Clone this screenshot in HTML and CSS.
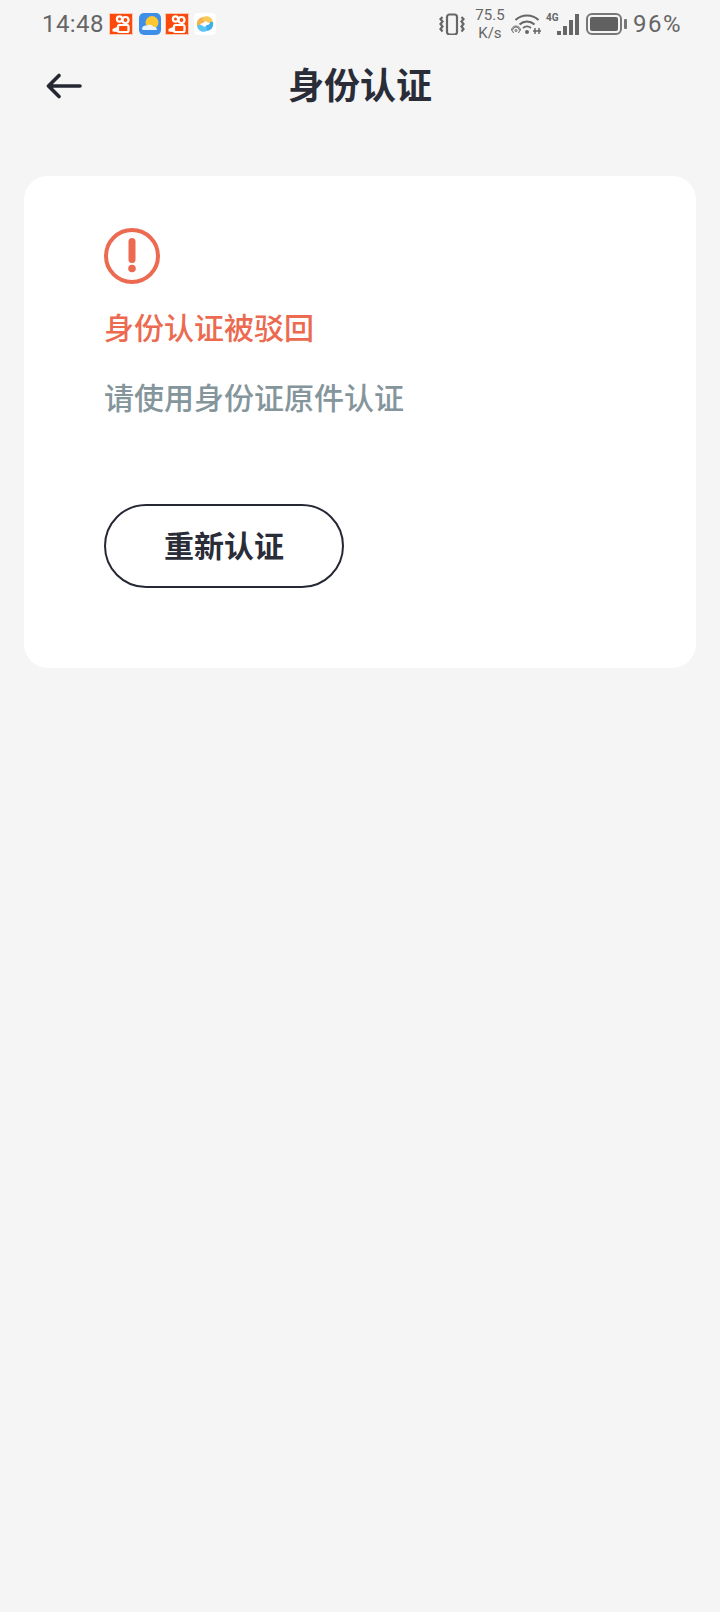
FILE: index.html
```html
<!DOCTYPE html>
<html lang="zh-CN">
<head>
    <meta charset="UTF-8">
    <meta name="viewport" content="width=device-width, initial-scale=1.0">
    <title>身份认证</title>
    <link rel="stylesheet" href="styles.css">
</head>
<body>
    <div class="status">
        <div class="status-left">
            <span class="clock">14:48</span>
            <svg class="app" viewBox="0 0 24 24"><rect y="1" width="24" height="22" fill="#fc4a0c"/><rect x=".5" y="1.500" width="23" height="21" fill="none" stroke="#fdc9b4"/><g fill="none" stroke="#fff" stroke-width="2.200"><circle cx="10.500" cy="7" r="2.600"/><circle cx="16.500" cy="8" r="3"/><rect x="9" y="13" width="10.500" height="7" rx="1.500"/></g><path d="M8 15l-4.500 2v2.500L8 20z" fill="#fff"/></svg>
            <svg class="app" viewBox="0 0 24 24"><rect x="2" y="1" width="22" height="22" rx="5" fill="#3d8fe8"/><circle cx="15" cy="10.500" r="6.500" fill="#fdc731"/><path d="M5 17c0-3 3-4 5-3.500 2-1.500 5-1 6 1 2 0 4 1 4 3.500H7c-1 0-2-.5-2-1z" fill="#e8f3fd"/></svg>
            <svg class="app" viewBox="0 0 24 24"><rect y="1" width="24" height="22" fill="#fc4a0c"/><rect x=".5" y="1.500" width="23" height="21" fill="none" stroke="#fdc9b4"/><g fill="none" stroke="#fff" stroke-width="2.200"><circle cx="10.500" cy="7" r="2.600"/><circle cx="16.500" cy="8" r="3"/><rect x="9" y="13" width="10.500" height="7" rx="1.500"/></g><path d="M8 15l-4.500 2v2.500L8 20z" fill="#fff"/></svg>
            <svg class="app" viewBox="0 0 24 24"><rect x="1" y="1" width="22" height="22" rx="4" fill="#fff"/><path d="M4 14c-1-5 2-9 7-9 2 2 1 5-1 6-2 0-3 1-3 3z" fill="#f6b24c"/><path d="M10 5c4-2 9 0 10 5-2 2-4 1-6 0-1-1-3-1-4-1z" fill="#f8c95a"/><path d="M20 10c1 5-2 9-7 9-2-2-1-5 1-6 2 0 3-1 3-3z" fill="#3cb0ef"/><path d="M14 19c-4 2-9 0-10-5 2-2 4-1 6 0 1 1 3 1 4 1z" fill="#5cc4f5"/></svg>
        </div>
        <div class="status-right">
            <svg class="ic-vibrate" viewBox="0 0 26 22" fill="none" stroke="#666" stroke-width="2.200"><rect x="8" y="1.500" width="10" height="20" rx="2.500"/><path d="M3.500 4l-2 2 2 2.500-2 2.500 2 2.500-2 2.500 2 2.500M22.500 4l2 2-2 2.500 2 2.500-2 2.500 2 2.500-2 2.500"/></svg>
            <div class="speed"><span>75.5</span><span>K/s</span></div>
            <svg class="ic-wifi" viewBox="0 0 30 22"><g fill="none" stroke="#666" stroke-width="2.200"><path d="M4.500 7c6.500-6 16.500-6 23 0M8.500 11.500c4.500-4 10.500-4 15 0"/></g><path d="M12 15c2.500-2 5.500-2 8 0" fill="none" stroke="#666" stroke-width="1.800"/><circle cx="16" cy="19" r="2" fill="#666"/><g fill="none" stroke="#666" stroke-width="1"><circle cx="5" cy="17.500" r="1"/><path d="M2.500 20a3.500 3.500 0 1 1 5 0M.5 17.500a4.500 4.500 0 0 1 9 0"/></g><path d="M24 15v6M28 15v6M22 18h8" stroke="#666" stroke-width="1.500"/></svg>
            <div class="signal">
                <span class="lte">4G</span>
                <i class="b1"></i><i class="b2"></i><i class="b3"></i><i class="b4"></i>
            </div>
            <div class="battery"><div class="battery-fill"></div></div>
            <div class="battery-cap"></div>
            <span class="percent">96%</span>
        </div>
    </div>

    <div class="header">
        <svg class="back" viewBox="0 0 36 26" fill="none" stroke="#252833" stroke-width="3.600" stroke-linecap="round" stroke-linejoin="round"><path d="M34 13H3M13 2.500L2.500 13 13 23.500"/></svg>
        <h1>身份认证</h1>
    </div>

    <div class="card">
        <svg class="warn" viewBox="0 0 56 56"><circle cx="28" cy="28" r="26" fill="none" stroke="#ec6a50" stroke-width="4"/><rect x="24.500" y="10" width="7" height="25" rx="3.500" fill="#ec6a50"/><circle cx="28" cy="40.500" r="3.800" fill="#ec6a50"/></svg>
        <p class="reject">身份认证被驳回</p>
        <p class="hint">请使用身份证原件认证</p>
        <button class="retry">重新认证</button>
    </div>
</body>
</html>
```

FILE: styles.css
```css
*
{
    box-sizing: border-box;
}
body
{
    margin: 0;
    height: 1612px;
    background: #f5f5f5;
    font-family: "Noto Sans CJK SC", "Noto Sans", sans-serif;
    overflow: hidden;
}
.status
{
    display: flex;
    justify-content: space-between;
    align-items: center;
    height: 48px;
    padding: 0 38px 0 42px;
    color: #666;
    font-family: Roboto, sans-serif;
}
.status-left, .status-right
{
    display: flex;
    align-items: center;
}
.status-left
{
    gap: 4px;
}
.clock
{
    font-size: 24px;
    letter-spacing: 0.4px;
    margin-right: 1px;
}
.app
{
    width: 24px;
    height: 24px;
}
.ic-vibrate
{
    width: 26px;
    height: 22px;
    margin-right: 10px;
}
.speed
{
    display: flex;
    flex-direction: column;
    align-items: center;
    width: 30px;
    font-size: 15px;
    line-height: 18px;
    margin-right: 6px;
}
.ic-wifi
{
    width: 30px;
    height: 22px;
    margin-right: 5px;
}
.signal
{
    position: relative;
    display: flex;
    align-items: flex-end;
    gap: 2px;
    width: 33px;
    height: 22px;
    padding-left: 11px;
    margin-right: 7px;
}
.signal i
{
    display: block;
    width: 4px;
    background: #666;
}
.b1 { height: 4px; }
.b2 { height: 9px; }
.b3 { height: 15px; }
.b4 { height: 21px; }
.lte
{
    position: absolute;
    left: 0;
    top: 0;
    font-size: 10px;
    line-height: 10px;
    font-weight: 700;
}
.battery
{
    width: 36px;
    height: 22px;
    border: 2px solid #777;
    border-radius: 6px;
    padding: 2px;
}
.battery-fill
{
    height: 100%;
    background: #606060;
    border-radius: 2px;
}
.battery-cap
{
    width: 3px;
    height: 10px;
    margin: 0 6px 0 2px;
    background: #777;
    border-radius: 1px;
}
.percent
{
    font-size: 24px;
    letter-spacing: 1.5px;
}
.header
{
    position: relative;
    display: flex;
    justify-content: center;
    align-items: center;
    height: 70px;
    padding-bottom: 1px;
}
.header h1
{
    margin: 0;
    font-size: 36px;
    font-weight: 700;
    color: #2a2d38;
}
.back
{
    position: absolute;
    left: 46px;
    top: 25px;
    width: 36px;
    height: 26px;
}
.card
{
    margin: 58px 24px 0;
    height: 492px;
    padding: 52px 80px 0;
    background: #fff;
    border-radius: 24px;
}
.warn
{
    display: block;
    width: 56px;
    height: 56px;
}
.reject
{
    margin: 20px 0 0;
    font-size: 30px;
    font-weight: 500;
    line-height: 44px;
    color: #ec6a50;
}
.hint
{
    margin: 26px 0 0;
    font-size: 30px;
    font-weight: 500;
    line-height: 44px;
    color: #84959b;
}
.retry
{
    display: block;
    width: 240px;
    height: 84px;
    margin-top: 86px;
    padding: 0 0 4px;
    border: 2px solid #252833;
    border-radius: 42px;
    background: #fff;
    color: #2a2d38;
    font-family: inherit;
    font-size: 30px;
    font-weight: 700;
}
```
